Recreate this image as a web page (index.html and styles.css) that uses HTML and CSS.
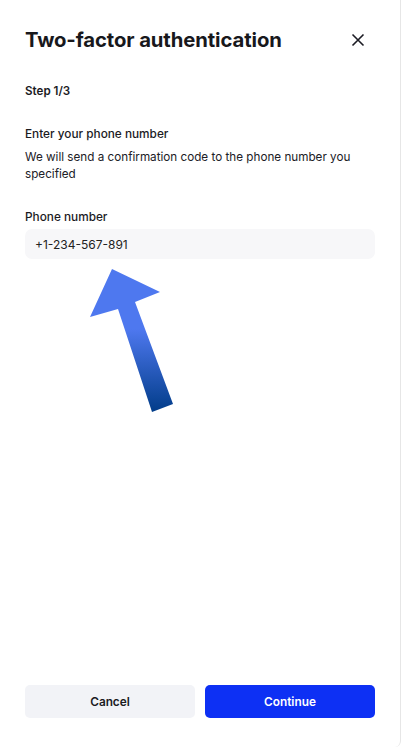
FILE: index.html
```html
<!DOCTYPE html>
<html>
<head>
<meta charset="utf-8">
<link rel="stylesheet" href="styles.css">
</head>
<body>
<div class="panel">
  <header class="head">
    <h1 class="title">Two-factor authentication</h1>
    <button class="close" aria-label="Close">
      <svg width="14" height="14" viewBox="0 0 14 14"><path d="M1.5 1.5L12.5 12.5M12.5 1.5L1.5 12.5" stroke="#1c1c24" stroke-width="1.6" fill="none"/></svg>
    </button>
  </header>
  <div class="step">Step 1/3</div>
  <div class="subtitle">Enter your phone number</div>
  <p class="desc">We will send a confirmation code to the phone number you specified</p>
  <label class="label">Phone number</label>
  <div class="input">+1-234-567-891</div>
  <div class="arrow-wrap">
    <svg class="arrow" width="403" height="160" viewBox="0 260 403 160">
      <defs>
        <linearGradient id="g" x1="0" y1="330" x2="0" y2="412" gradientUnits="userSpaceOnUse">
          <stop offset="0" stop-color="#4e78ef"/>
          <stop offset="1" stop-color="#023d8a"/>
        </linearGradient>
      </defs>
      <polygon points="112,270 160,293 135,303 173,405 152,413 118,310 90,318" fill="url(#g)"/>
    </svg>
  </div>
  <footer class="foot">
    <button class="btn cancel">Cancel</button>
    <button class="btn primary">Continue</button>
  </footer>
</div>
</body>
</html>
```
FILE: styles.css
```css
* { box-sizing: border-box; }
html, body { margin: 0; padding: 0; background: #fff; }
body { font-family: Inter, "Noto Sans", sans-serif; color: #1b1b1f; }
.panel {
  width: 401px;
  height: 747px;
  border-right: 1px solid #e6e6e6;
  border-radius: 0 0 6px 6px;
  padding: 0 25px;
  display: flex;
  flex-direction: column;
  position: relative;
}
.head {
  display: flex;
  align-items: center;
  justify-content: space-between;
  height: 78px;
}
.title {
  margin: 0;
  font-size: 20.3px;
  font-weight: 700;
  letter-spacing: -0.1px;
  color: #18181c;
}
.close {
  border: 0;
  background: none;
  padding: 0;
  margin-right: 10px;
  margin-top: 1px;
  width: 14px;
  height: 14px;
  display: flex;
}
.step {
  font-size: 11.6px;
  font-weight: 600;
  margin-top: 5px;
  line-height: 16px;
}
.subtitle {
  font-size: 11.8px;
  font-weight: 500;
  margin-top: 27px;
  line-height: 16px;
}
.desc {
  font-size: 11.7px;
  line-height: 17px;
  margin: 7px 0 0;
  color: #202026;
}
.label {
  display: block;
  font-size: 11.8px;
  font-weight: 500;
  margin-top: 26px;
  line-height: 16px;
}
.input {
  margin-top: 4px;
  height: 30px;
  background: #f7f7f9;
  border-radius: 7px;
  padding: 0 10px;
  display: flex;
  align-items: center;
  font-size: 12px;
  color: #222;
}
.arrow-wrap {
  margin: 0 -25px 0;
  height: 160px;
}
.arrow { display: block; }
.foot {
  margin-top: auto;
  margin-bottom: 29px;
  display: flex;
  gap: 10px;
}
.btn {
  flex: 1;
  height: 33px;
  border: 0;
  border-radius: 5px;
  font-family: Inter, "Noto Sans", sans-serif;
  font-size: 11.8px;
  font-weight: 600;
}
.cancel { background: #f2f3f7; color: #1b1b1f; }
.primary { background: #0d30f4; color: #fff; }
```
